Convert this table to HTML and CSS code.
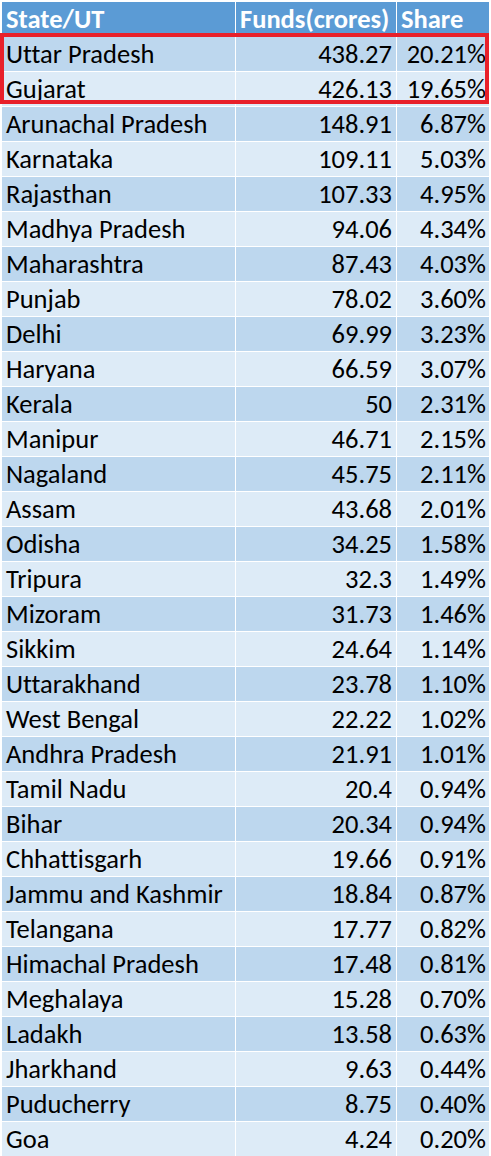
FILE: index.html
```html
<!DOCTYPE html>
<html lang="en">
<head>
    <meta charset="UTF-8">
    <meta name="viewport" content="width=device-width, initial-scale=1.0">
    <title>State/UT Funds</title>
    <link rel="stylesheet" href="styles.css">
</head>
<body>
    <div class="sheet">
        <table class="funds">
            <thead>
                <tr><th class="name">State/UT</th><th class="num">Funds(crores)</th><th class="share">Share</th></tr>
            </thead>
            <tbody>
                <tr><td class="name">Uttar Pradesh</td><td class="num">438.27</td><td class="share">20.21%</td></tr>
                <tr><td class="name">Gujarat</td><td class="num">426.13</td><td class="share">19.65%</td></tr>
                <tr><td class="name">Arunachal Pradesh</td><td class="num">148.91</td><td class="share">6.87%</td></tr>
                <tr><td class="name">Karnataka</td><td class="num">109.11</td><td class="share">5.03%</td></tr>
                <tr><td class="name">Rajasthan</td><td class="num">107.33</td><td class="share">4.95%</td></tr>
                <tr><td class="name">Madhya Pradesh</td><td class="num">94.06</td><td class="share">4.34%</td></tr>
                <tr><td class="name">Maharashtra</td><td class="num">87.43</td><td class="share">4.03%</td></tr>
                <tr><td class="name">Punjab</td><td class="num">78.02</td><td class="share">3.60%</td></tr>
                <tr><td class="name">Delhi</td><td class="num">69.99</td><td class="share">3.23%</td></tr>
                <tr><td class="name">Haryana</td><td class="num">66.59</td><td class="share">3.07%</td></tr>
                <tr><td class="name">Kerala</td><td class="num">50</td><td class="share">2.31%</td></tr>
                <tr><td class="name">Manipur</td><td class="num">46.71</td><td class="share">2.15%</td></tr>
                <tr><td class="name">Nagaland</td><td class="num">45.75</td><td class="share">2.11%</td></tr>
                <tr><td class="name">Assam</td><td class="num">43.68</td><td class="share">2.01%</td></tr>
                <tr><td class="name">Odisha</td><td class="num">34.25</td><td class="share">1.58%</td></tr>
                <tr><td class="name">Tripura</td><td class="num">32.3</td><td class="share">1.49%</td></tr>
                <tr><td class="name">Mizoram</td><td class="num">31.73</td><td class="share">1.46%</td></tr>
                <tr><td class="name">Sikkim</td><td class="num">24.64</td><td class="share">1.14%</td></tr>
                <tr><td class="name">Uttarakhand</td><td class="num">23.78</td><td class="share">1.10%</td></tr>
                <tr><td class="name">West Bengal</td><td class="num">22.22</td><td class="share">1.02%</td></tr>
                <tr><td class="name">Andhra Pradesh</td><td class="num">21.91</td><td class="share">1.01%</td></tr>
                <tr><td class="name">Tamil Nadu</td><td class="num">20.4</td><td class="share">0.94%</td></tr>
                <tr><td class="name">Bihar</td><td class="num">20.34</td><td class="share">0.94%</td></tr>
                <tr><td class="name">Chhattisgarh</td><td class="num">19.66</td><td class="share">0.91%</td></tr>
                <tr><td class="name">Jammu and Kashmir</td><td class="num">18.84</td><td class="share">0.87%</td></tr>
                <tr><td class="name">Telangana</td><td class="num">17.77</td><td class="share">0.82%</td></tr>
                <tr><td class="name">Himachal Pradesh</td><td class="num">17.48</td><td class="share">0.81%</td></tr>
                <tr><td class="name">Meghalaya</td><td class="num">15.28</td><td class="share">0.70%</td></tr>
                <tr><td class="name">Ladakh</td><td class="num">13.58</td><td class="share">0.63%</td></tr>
                <tr><td class="name">Jharkhand</td><td class="num">9.63</td><td class="share">0.44%</td></tr>
                <tr><td class="name">Puducherry</td><td class="num">8.75</td><td class="share">0.40%</td></tr>
                <tr><td class="name">Goa</td><td class="num">4.24</td><td class="share">0.20%</td></tr>
            </tbody>
        </table>
        <div class="highlight"></div>
    </div>
</body>
</html>
```

FILE: styles.css
```css
html, body {
    margin: 0;
    padding: 0;
    background: #fff;
}
.sheet {
    position: relative;
    width: 491px;
    padding: 1px 0 0 1px;
    box-sizing: border-box;
}
.funds {
    border-collapse: separate;
    border-spacing: 1px;
    font-family: Calibri, Carlito, Lato, "Open Sans", sans-serif;
    font-size: 26.5px;
    font-variant-ligatures: none;
    color: #000;
}
.funds th,
.funds td {
    height: 34px;
    padding: 0 4px;
    box-sizing: border-box;
    line-height: 34px;
    white-space: nowrap;
}
.funds th {
    background: #5b9bd5;
    color: #fff;
    font-weight: bold;
    text-align: left;
}
.funds tbody tr:nth-child(odd) td {
    background: #bdd7ee;
}
.funds tbody tr:nth-child(even) td {
    background: #ddebf7;
}
.name {
    width: 233px;
    text-align: left;
}
.num {
    width: 160px;
    text-align: right;
}
.funds td.share {
    width: 92px;
    text-align: right;
    padding-right: 3px;
}
.highlight {
    position: absolute;
    left: 0;
    top: 33px;
    width: 489px;
    height: 71px;
    border: 4px solid #e8202a;
    box-sizing: border-box;
}
```
